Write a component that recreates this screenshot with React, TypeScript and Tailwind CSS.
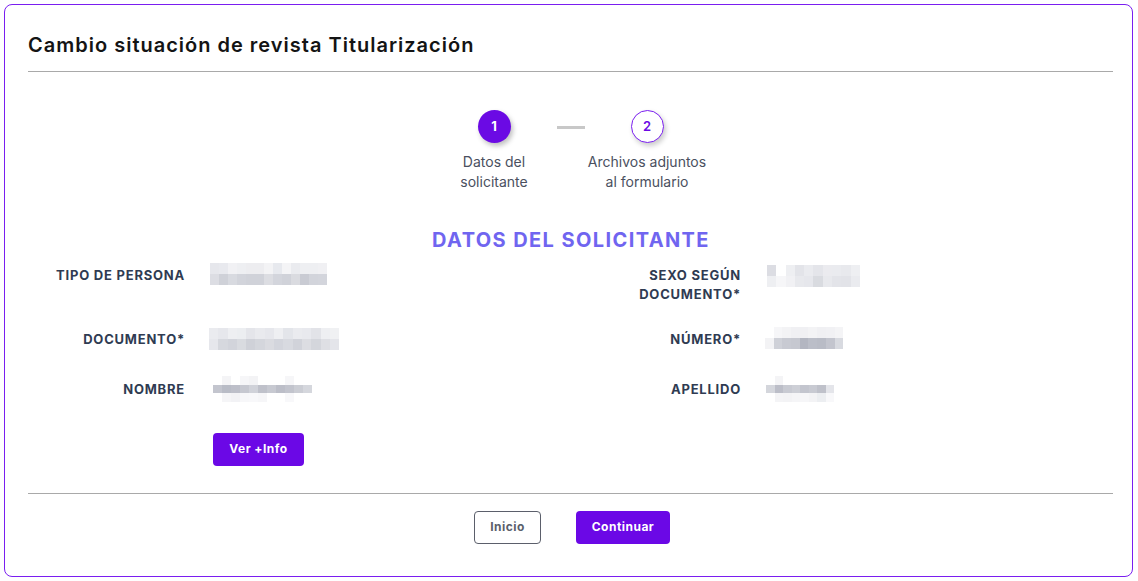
import React from "react";

const FONT = { fontFamily: "Inter, 'Open Sans', sans-serif" };

type Row = string[];
function Mosaic({ rows, cell = 9, h = 11 }: { rows: Row[]; cell?: number; h?: number }) {
  return (
    <div className="flex flex-col">
      {rows.map((r, i) => (
        <div key={i} className="flex">
          {r.map((c, j) => (
            <div key={j} style={{ width: cell, height: h, background: c }} />
          ))}
        </div>
      ))}
    </div>
  );
}

const tipo: Row[] = [
  ["#e6e7ec", "#e8e9ee", "#f1f1f4", "#eeeff2", "#ededf0", "#ededf0", "#f3f3f5", "#e7e9ee", "#f4f4f6", "#eaebef", "#eeeff2", "#eeeff2", "#f0f0f3"],
  ["#dcdde3", "#cfd1d8", "#d8dae0", "#d2d4db", "#d0d2d9", "#d0d2d9", "#dcdde2", "#d3d5dc", "#d0d2d9", "#dadbe0", "#c9cbd3", "#d2d4db", "#d3d5dc"],
];
const documento: Row[] = [
  ["#eaebef", "#e6e7ec", "#eeeff2", "#eceef1", "#e4e5ea", "#e9eaee", "#e6e7ec", "#eeeff2", "#e3e5ea", "#eaebef", "#e8e9ee", "#e2e3e8", "#eeeff2", "#f0f1f3"],
  ["#e6e7ec", "#d6d8de", "#d2d4db", "#d9dbe0", "#cfd1d8", "#d4d6dc", "#dadbe0", "#d3d5dc", "#d8dae0", "#d1d3da", "#dcdde2", "#d4d6dc", "#dedfe4", "#e4e5ea"],
];
const nombre: Row[] = [
  ["#ffffff", "#f4f4f6", "#ffffff", "#f6f6f8", "#f3f3f5", "#ffffff", "#ffffff", "#ffffff", "#f6f6f8", "#ffffff", "#ffffff"],
  ["#c3c5ce", "#b9bcc6", "#bdbfc9", "#c6c8d0", "#d0d2d9", "#bfc1ca", "#c7c9d1", "#bcbec8", "#c2c4cd", "#cbcdd4", "#d5d7dd"],
  ["#ffffff", "#f5f5f7", "#f2f2f5", "#f7f7f9", "#f8f8fa", "#f6f6f8", "#ffffff", "#ffffff", "#f8f8fa", "#ffffff", "#ffffff"],
];
const sexo: Row[] = [
  ["#dcdde3", "#ffffff", "#eeeff2", "#e3e4e9", "#eaebef", "#e4e5ea", "#ebebef", "#eaebef", "#e8e9ed", "#eeeff2"],
  ["#eeeff2", "#f6f6f8", "#f1f1f4", "#e8e9ed", "#e6e7ec", "#d9dbe0", "#e8e9ed", "#e3e4e9", "#e2e3e8", "#eaebef"],
];
const numero: Row[] = [
  ["#ffffff", "#f6f6f8", "#f3f3f5", "#f0f0f3", "#f0f0f3", "#f3f3f5", "#f0f0f3", "#f1f1f4", "#f4f4f6"],
  ["#f3f3f5", "#cfd1d8", "#c8cad2", "#c6c8d0", "#b3b6c1", "#bbbec8", "#b9bcc6", "#c3c5ce", "#d8dae0"],
];
const apellido: Row[] = [
  ["#ffffff", "#f4f4f6", "#ffffff", "#ffffff", "#ffffff", "#ffffff", "#ffffff", "#ffffff"],
  ["#d4d6dc", "#bcbec8", "#c8cad2", "#cdcfd6", "#c3c5ce", "#c8cad2", "#bfc1ca", "#e4e5ea"],
  ["#ffffff", "#f4f4f6", "#f3f3f5", "#f5f5f7", "#f6f6f8", "#f3f3f5", "#eceef1", "#f8f8fa"],
];

function Label({ children }: { children: React.ReactNode }) {
  return (
    <div className="text-right text-[13px] leading-[19px] font-bold uppercase text-[#2f3b52] tracking-[0.06em]">
      {children}
    </div>
  );
}

export default function App() {
  return (
    <div className="w-[1138px] h-[581px] bg-white p-[4px] pr-[5px]" style={FONT}>
      <div className="h-full border border-[#7a1ef0] rounded-[8px] flex flex-col pl-[23px] pr-[19px]">
        <h1 className="mt-[26px] text-[20px] leading-[28px] font-semibold text-[#141414] tracking-[0.05em]">
          Cambio situación de revista Titularización
        </h1>
        <div className="mt-[12px] h-px bg-[#a9a9a9]" />

        {/* stepper */}
        <div className="mt-[38px] flex justify-center pl-[2px]">
          <div className="w-[120px] flex flex-col items-center">
            <div className="w-[33px] h-[33px] rounded-full bg-[#6b0ae4] text-white text-[13px] font-bold flex items-center justify-center shadow-[2px_3px_5px_rgba(0,0,0,0.25)]">
              1
            </div>
            <div className="mt-[9px] text-[14px] leading-[20px] text-[#4a5060] text-center">
              Datos del
              <br />
              solicitante
            </div>
          </div>
          <div className="w-[28px] ml-[3px] h-[33px] flex items-center">
            <div className="w-full h-[3px] bg-[#c8c8c8] mt-[2px]" />
          </div>
          <div className="w-[124px] flex flex-col items-center">
            <div className="w-[33px] h-[33px] rounded-full bg-white border-[1.5px] border-[#7a1ef0] text-[#6b0ae4] text-[13px] font-semibold flex items-center justify-center shadow-[2px_3px_5px_rgba(0,0,0,0.2)]">
              2
            </div>
            <div className="mt-[9px] text-[14px] leading-[20px] text-[#4a5060] text-center">
              Archivos adjuntos
              <br />
              al formulario
            </div>
          </div>
        </div>

        <h2 className="mt-[34px] pl-[1px] text-center text-[20px] leading-[28px] font-bold text-[#7065f0] uppercase tracking-[0.07em]">
          Datos del solicitante
        </h2>

        {/* form */}
        <div className="mt-[12px] grid grid-cols-[157px_349px_157px_1fr] gap-x-[25px]">
          <Label>Tipo de persona</Label>
          <div className="-mt-[3px]">
            <Mosaic rows={tipo} />
          </div>
          <Label>
            Sexo según
            <br />
            documento*
          </Label>
          <div className="-mt-[1px] ml-[1px]">
            <Mosaic rows={sexo} cell={9.3} />
          </div>

          <div className="mt-[26px]">
            <Label>Documento*</Label>
          </div>
          <div className="mt-[24px] -ml-[1px]">
            <Mosaic rows={documento} cell={9.3} />
          </div>
          <div className="mt-[26px]">
            <Label>Número*</Label>
          </div>
          <div className="mt-[23px] -ml-[1px]">
            <Mosaic rows={numero} cell={8.7} />
          </div>

          <div className="mt-[30px]">
            <Label>Nombre</Label>
          </div>
          <div className="mt-[26px] ml-[3px]">
            <Mosaic rows={nombre} cell={9} h={8.5} />
          </div>
          <div className="mt-[30px]">
            <Label>Apellido</Label>
          </div>
          <div className="mt-[26px]">
            <Mosaic rows={apellido} cell={8.5} h={8.5} />
          </div>

          <div />
          <div className="mt-[31px] ml-[3px]">
            <button className="w-[91px] h-[33px] rounded-[4px] bg-[#6b08e6] text-white text-[12px] font-bold tracking-[0.04em]">
              Ver +Info
            </button>
          </div>
        </div>

        <div className="mt-[27px] h-px bg-[#a9a9a9]" />

        <div className="mt-[17px] flex justify-center gap-[35px] pl-[3px]">
          <button className="w-[67px] h-[33px] rounded-[4px] border border-[#5b5f6b] bg-white text-[#5b5f6b] text-[12px] font-bold tracking-[0.04em]">
            Inicio
          </button>
          <button className="w-[94px] h-[33px] rounded-[4px] bg-[#6b08e6] text-white text-[12px] font-bold tracking-[0.04em]">
            Continuar
          </button>
        </div>
      </div>
    </div>
  );
}
